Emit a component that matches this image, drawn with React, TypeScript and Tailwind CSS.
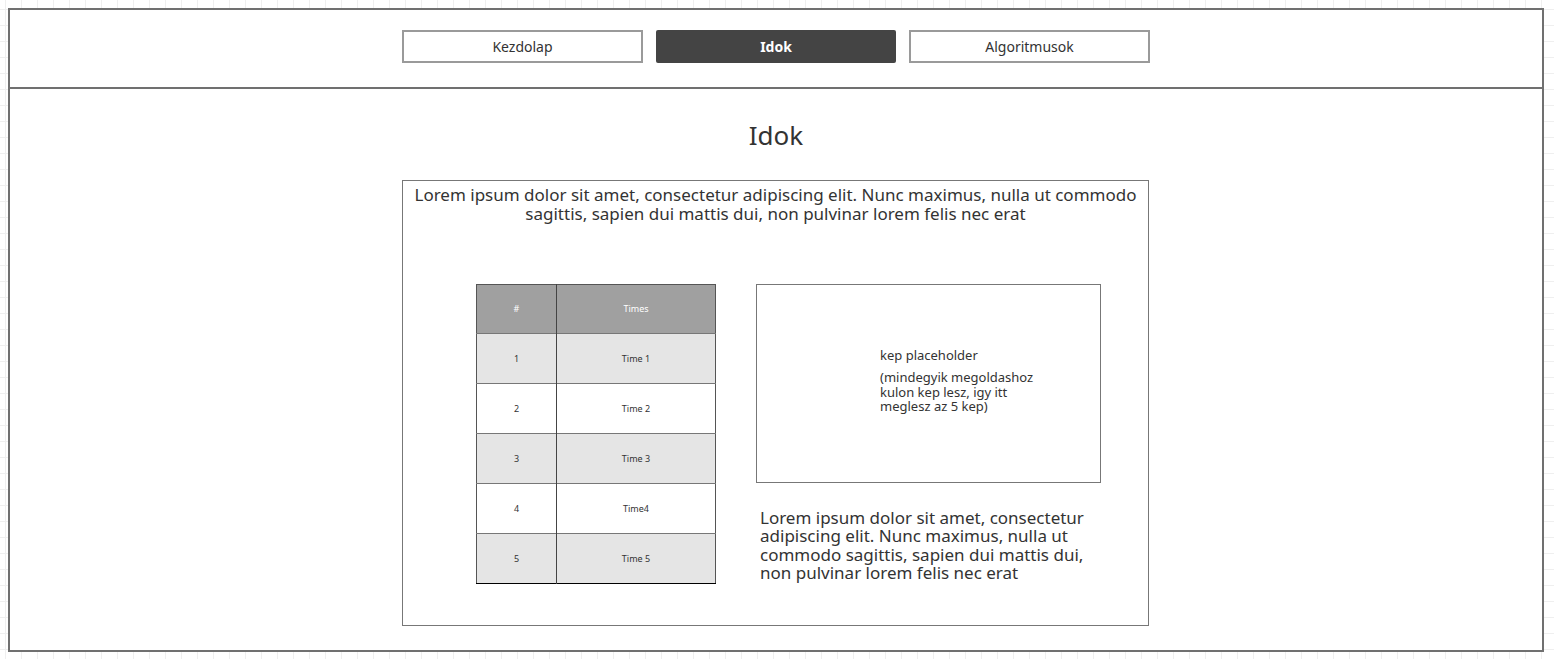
const rows = [
  { n: '1', t: 'Time 1' },
  { n: '2', t: 'Time 2' },
  { n: '3', t: 'Time 3' },
  { n: '4', t: 'Time4' },
  { n: '5', t: 'Time 5' },
]

const lorem =
  'Lorem ipsum dolor sit amet, consectetur adipiscing elit. Nunc maximus, nulla ut commodo sagittis, sapien dui mattis dui, non pulvinar lorem felis nec erat'

const App = () => {
  return (
    <div
      className="w-full h-[659px] pl-2 pt-2 pr-[10px] pb-[7px] bg-white bg-[linear-gradient(to_right,#efefef_1px,transparent_1px),linear-gradient(to_bottom,#efefef_1px,transparent_1px)] bg-[size:16px_16px] bg-[position:5px_9px] text-[#333] font-['Noto_Sans','Liberation_Sans',sans-serif]"
    >
      <div className="h-full flex flex-col bg-white border-2 border-[#707070]">
        {/* nav */}
        <div className="h-[79px] shrink-0 border-b-2 border-[#707070] flex justify-center items-start pt-5 gap-[13px]">
          <button className="w-[241px] h-[33px] border-2 border-[#9a9a9a] bg-white text-[14px]">Kezdolap</button>
          <button className="w-[240px] h-[33px] rounded-[2px] bg-[#444] text-white text-[14px] font-bold">Idok</button>
          <button className="w-[241px] h-[33px] border-2 border-[#9a9a9a] bg-white text-[14px]">Algoritmusok</button>
        </div>

        {/* content */}
        <div className="flex-1 flex flex-col items-center">
          <h1 className="mt-[28px] text-[26px] leading-[36px] font-normal text-[#333]">Idok</h1>

          <div className="mt-[27px] mr-px w-[747px] h-[446px] border border-[#777] flex flex-col">
            <p className="pt-[4px] px-2 text-center text-[17px] leading-[19px]">{lorem}</p>

            <div className="mt-[61px] pl-[73px] flex gap-[40px]">
              <table className="w-[240px] h-[299px] border-collapse border border-[#555] text-[9px] table-fixed">
                <thead>
                  <tr className="h-[49px] bg-[#a0a0a0] text-white">
                    <th className="w-[80px] border-r border-[#444] font-normal">#</th>
                    <th className="font-normal">Times</th>
                  </tr>
                </thead>
                <tbody>
                  {rows.map((r, i) => (
                    <tr
                      key={r.n}
                      className={`h-[50px] border-t border-[#777] ${i % 2 === 0 ? 'bg-[#e5e5e5]' : 'bg-white'} ${i === rows.length - 1 ? 'border-b border-b-black' : ''}`}
                    >
                      <td className="border-r border-[#444] text-center">{r.n}</td>
                      <td className="text-center">{r.t}</td>
                    </tr>
                  ))}
                </tbody>
              </table>

              <div className="w-[345px] flex flex-col">
                <div className="h-[199px] border border-[#777] pl-[123px] pt-[61px]">
                  <div className="w-[170px] text-[13px]">
                    <div className="leading-[18px]">kep placeholder</div>
                    <div className="mt-[6px] leading-[14.5px]">
                      (mindegyik megoldashoz kulon kep lesz, igy itt meglesz az 5 kep)
                    </div>
                  </div>
                </div>
                <div className="mt-[26px] pl-1 w-[335px] text-[17px] leading-[18.3px]">{lorem}</div>
              </div>
            </div>
          </div>
        </div>
      </div>
    </div>
  )
}

export default App
